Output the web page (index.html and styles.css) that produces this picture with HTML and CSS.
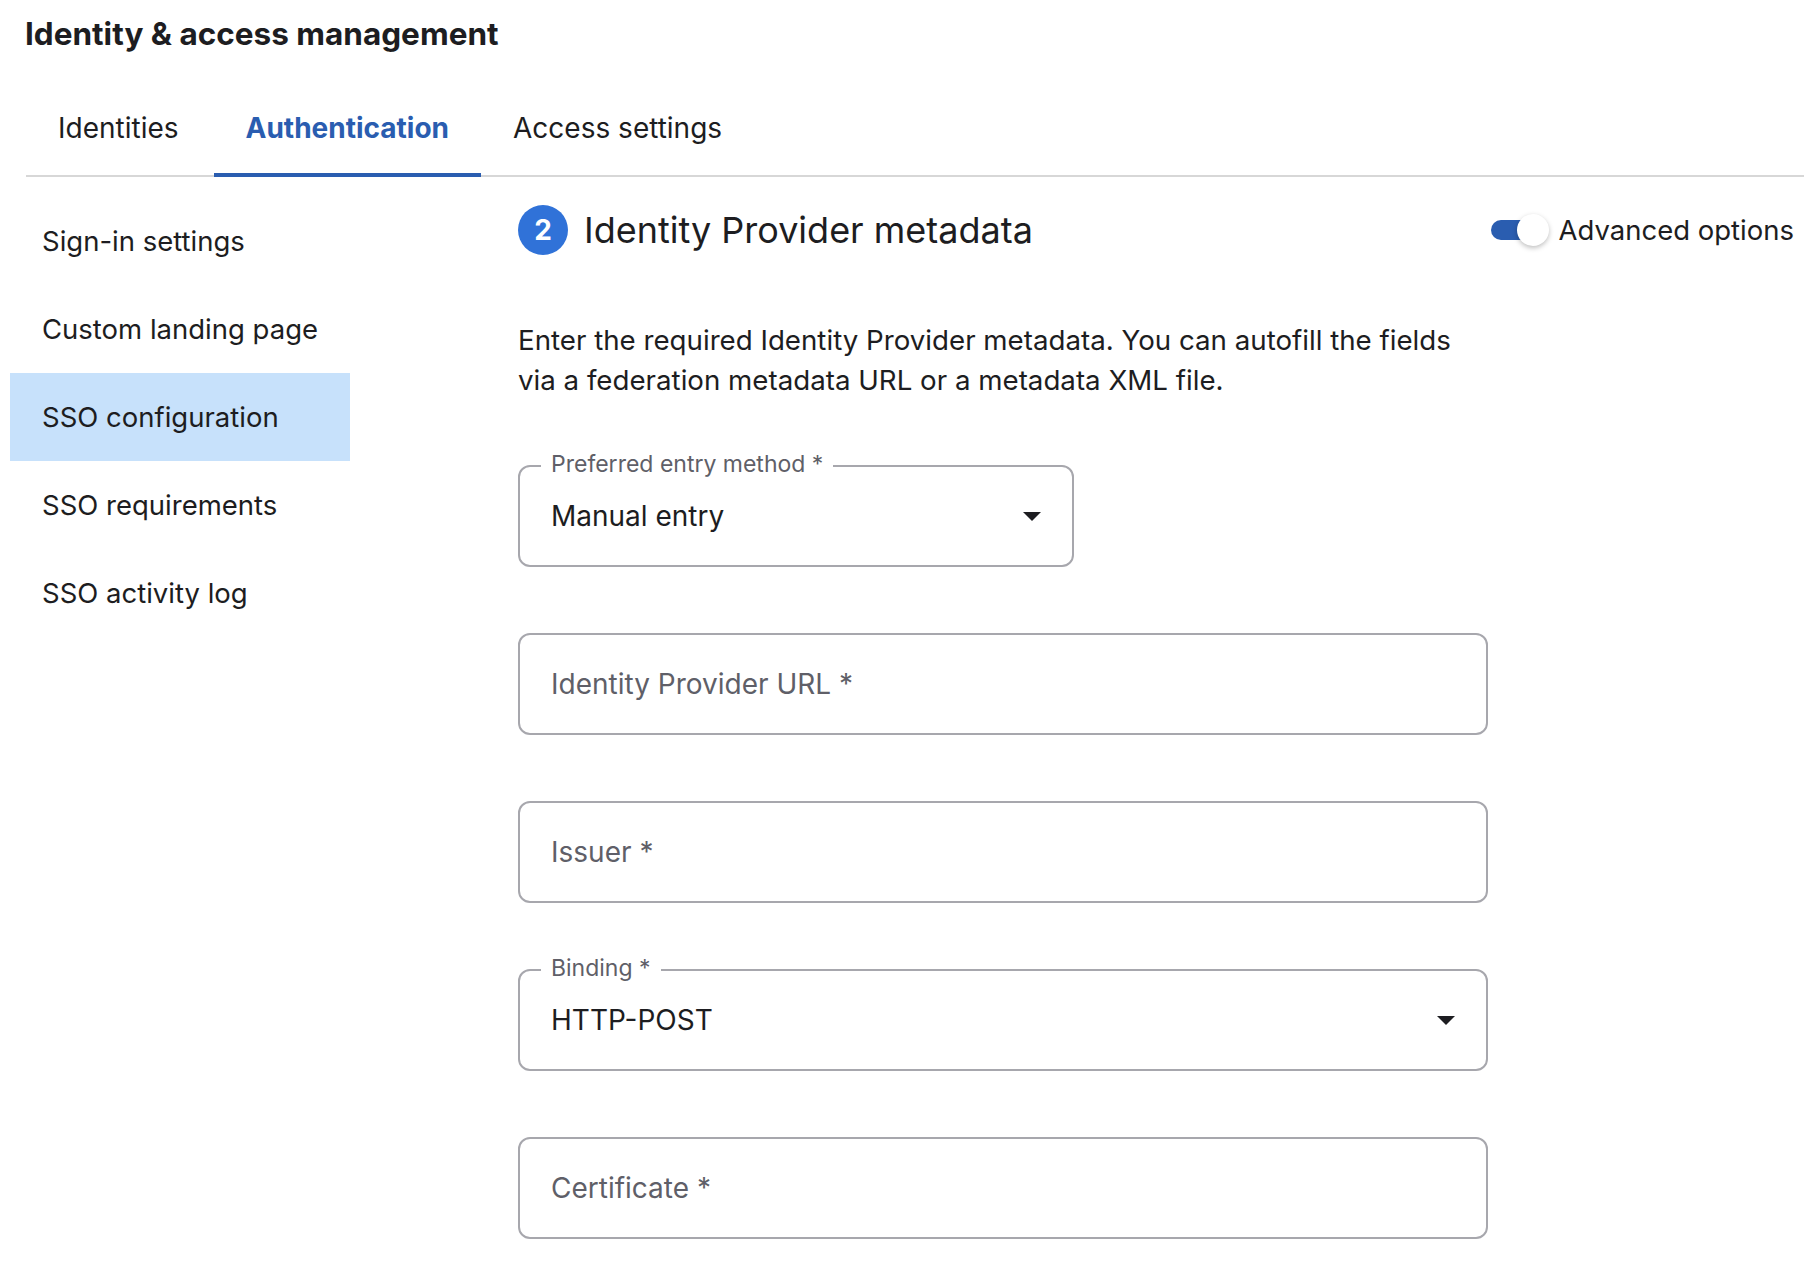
FILE: index.html
```html
<!DOCTYPE html>
<html lang="en">
<head>
  <meta charset="UTF-8">
  <meta name="viewport" content="width=device-width, initial-scale=1.0">
  <title>Identity &amp; access management</title>
  <link rel="stylesheet" href="styles.css">
</head>
<body>

  <h1 class="page-title">Identity &amp; access management</h1>

  <!-- top tabs -->
  <nav class="tabs">
    <a class="tab">Identities</a>
    <a class="tab active">Authentication</a>
    <a class="tab">Access settings</a>
  </nav>

  <div class="layout">
    <!-- side menu -->
    <ul class="side-nav">
      <li>Sign-in settings</li>
      <li>Custom landing page</li>
      <li class="active">SSO configuration</li>
      <li>SSO requirements</li>
      <li>SSO activity log</li>
    </ul>

    <main class="main">
      <div class="main-header">
        <div class="step">
          <span class="step-num">2</span>
          <h2 class="step-title">Identity Provider metadata</h2>
        </div>
        <label class="switch-wrap">
          <span class="switch">
            <span class="switch-track"></span>
            <span class="switch-knob"></span>
          </span>
          Advanced options
        </label>
      </div>

      <p class="intro">Enter the required Identity Provider metadata. You can autofill the fields via a federation metadata URL or a metadata XML file.</p>

      <form class="form">
        <div class="field select narrow">
          <span class="field-label">Preferred entry method *</span>
          <span class="field-value">Manual entry</span>
          <svg class="arrow" width="18" height="9" viewBox="0 0 18 9"><path d="M0 0h18L9 9z" fill="#1d1d21"/></svg>
        </div>

        <input class="field" type="text" placeholder="Identity Provider URL *">

        <input class="field" type="text" placeholder="Issuer *">

        <div class="field select">
          <span class="field-label">Binding *</span>
          <span class="field-value">HTTP-POST</span>
          <svg class="arrow" width="18" height="9" viewBox="0 0 18 9"><path d="M0 0h18L9 9z" fill="#1d1d21"/></svg>
        </div>

        <input class="field" type="text" placeholder="Certificate *">
      </form>
    </main>
  </div>

</body>
</html>
```

FILE: styles.css
```css
/* base */
body {
  margin: 0;
  font-family: Inter, "Noto Sans", sans-serif;
  color: #1d1d21;
  background-color: #fff;
}

.page-title {
  margin: 0;
  padding: 14px 0 0 25px;
  font-size: 31.5px;
  line-height: 40px;
  font-weight: 700;
}

/* tabs */
.tabs {
  display: flex;
  margin: 34px 0 0 26px;
  border-bottom: 2px solid #d7d7d7;
}

.tab {
  padding: 20px 32px 25px;
  font-size: 28px;
  line-height: 40px;
  border-bottom: 4px solid transparent;
  margin-bottom: -2px;
  cursor: pointer;
}

.tab:first-child {
  padding-right: 35px;
}

.tab.active {
  color: #2a5db0;
  font-weight: 700;
  border-bottom-color: #2a5db0;
}

/* layout */
.layout {
  display: flex;
  padding: 20px 10px 0;
}

.side-nav {
  width: 340px;
  flex-shrink: 0;
  list-style: none;
  margin: 0;
  padding: 0;
}

.side-nav li {
  height: 88px;
  display: flex;
  align-items: center;
  padding-left: 32px;
  font-size: 27.5px;
}

.side-nav li.active {
  background-color: #c7e1fb;
}

.main {
  flex: 1;
  margin-left: 168px;
  padding-top: 8px;
}

.main-header {
  display: flex;
  align-items: center;
  justify-content: space-between;
  height: 50px;
}

.step {
  display: flex;
  align-items: center;
  gap: 16px;
}

.step-num {
  width: 50px;
  height: 50px;
  border-radius: 50%;
  background-color: #3072d8;
  color: #fff;
  font-size: 28px;
  font-weight: 700;
  display: flex;
  align-items: center;
  justify-content: center;
}

.step-title {
  margin: 0;
  font-size: 36px;
  line-height: 50px;
  font-weight: 400;
}

/* toggle */
.switch-wrap {
  display: flex;
  align-items: center;
  gap: 9px;
  font-size: 27.5px;
}

.switch {
  position: relative;
  width: 58px;
  height: 32px;
}

.switch-track {
  position: absolute;
  left: 0;
  top: 6px;
  width: 41px;
  height: 20px;
  border-radius: 10px;
  background-color: #2a5db0;
}

.switch-knob {
  position: absolute;
  right: 0;
  top: 0;
  width: 32px;
  height: 32px;
  border-radius: 50%;
  background-color: #fff;
  box-shadow: 0 2px 5px rgba(0, 0, 0, 0.25);
}

.intro {
  margin: 65px 0 0;
  max-width: 960px;
  font-size: 27.7px;
  line-height: 40px;
}

/* form fields */
.form {
  display: flex;
  flex-direction: column;
  gap: 66px;
  margin-top: 65px;
  width: 970px;
}

.field {
  position: relative;
  box-sizing: border-box;
  width: 100%;
  height: 102px;
  display: flex;
  align-items: center;
  padding: 0 31px;
  border: 2px solid #a7a7ad;
  border-radius: 12px;
  font-family: inherit;
  font-size: 28px;
  color: #1d1d21;
  background-color: #fff;
  outline: none;
}

.field::placeholder {
  color: #5f5f68;
}

.field.narrow {
  width: 556px;
}

.field-label {
  position: absolute;
  top: -19px;
  left: 21px;
  padding: 0 10px;
  background-color: #fff;
  font-size: 23px;
  line-height: 32px;
  color: #5f5f68;
}

.arrow {
  margin-left: auto;
}
```
